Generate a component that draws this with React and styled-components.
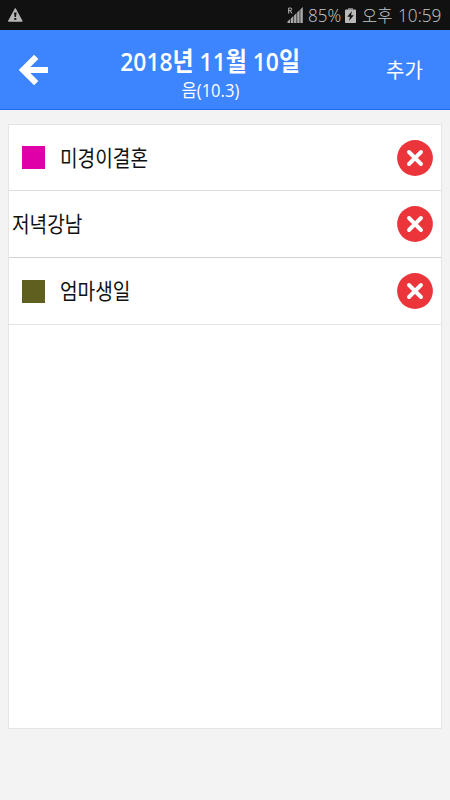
import React from 'react'
import styled, { createGlobalStyle } from 'styled-components'

const GlobalStyle = createGlobalStyle`
    * {
        box-sizing: border-box;
    }

    body {
        margin: 0;
        background-color: #f3f3f3;
        font-family: "Open Sans", "Noto Sans CJK KR", sans-serif;
    }

    svg {
        display: block;
    }
`

const Screen = styled.div`
    display: flex;
    flex-direction: column;
    width: 450px;
    height: 800px;
    background-color: #f3f3f3;
    overflow: hidden;
`

const StatusBar = styled.div`
    display: flex;
    align-items: center;
    flex: none;
    height: 30px;
    padding: 0 8px 0 7px;
    background-color: #111111;
    color: #c8c8c8;
`

const StatusIcons = styled.div`
    display: flex;
    align-items: center;
    margin-left: auto;
`

// condensed text, the box keeps the drawn width
const Label = styled.span`
    display: flex;
    flex: none;
    justify-content: ${props => props.$align || 'flex-start'};
    width: ${props => props.$width}px;
    margin-left: ${props => props.$left || 0}px;
    margin-bottom: ${props => props.$lift || 0}px;
    font-size: ${props => props.$size}px;
    font-weight: ${props => props.$weight || 400};
    line-height: 1;
    white-space: pre;

    > span {
        flex: none;
        transform: scaleX(${props => props.$scale || 1});
        transform-origin: ${props => props.$align === 'center' ? 'center' : 'left'};
    }
`

const Header = styled.header`
    display: grid;
    grid-template-columns: 69px 1fr 99px;
    flex: none;
    height: 80px;
    background-color: #3d84ff;
    border-bottom: 1px solid #1a6cf0;
    color: #ffffff;
`

const BackButton = styled.button`
    display: flex;
    align-items: flex-start;
    padding: 24px 0 0 18px;
    border: none;
    background: none;
`

const AddButton = styled.button`
    display: flex;
    align-items: flex-start;
    padding: 31px 0 0 35px;
    border: none;
    background: none;
    color: inherit;
    font-family: inherit;
`

const TitleBox = styled.div`
    display: flex;
    flex-direction: column;
    align-items: center;
    gap: 7px;
    padding-top: 18px;
`

const Panel = styled.ul`
    flex: none;
    width: 434px;
    height: 605px;
    margin: 14px 0 0 8px;
    padding: 0;
    list-style: none;
    background-color: #ffffff;
    border: 1px solid #e5e5e5;
`

const Row = styled.li`
    display: flex;
    align-items: center;
    height: ${props => props.$height}px;
    padding: 0 8px 0 ${props => props.$plain ? 3 : 13}px;
    border-bottom: 1px solid ${props => props.$line};
    color: #111111;
`

const Swatch = styled.span`
    flex: none;
    width: 23px;
    height: 23px;
    margin-right: 15px;
    background-color: ${props => props.$color};
`

const RemoveButton = styled.button`
    margin-left: auto;
    padding: 0;
    border: none;
    background: none;
`

const events = [
    { name: '미경이결혼', color: '#e000a8', width: 89, height: 66, line: '#dedede' },
    { name: '저녁강남', width: 71, height: 67, line: '#d2d2d2' },
    { name: '엄마생일', color: '#5f5f20', width: 71, height: 67, line: '#e3e3e3' },
]

const Warning = () => (
    <svg width="17" height="16" viewBox="0 0 17 16">
        <path d="M8.3 1.5 L15.2 14.2 H1.4 Z" fill="#b5b5b5" stroke="#b5b5b5" strokeLinejoin="round" />
        <path d="M7 5.5 H9.6 L9 10 H7.6 Z" fill="#111111" />
        <rect x="7.3" y="11" width="2" height="1.9" fill="#111111" />
    </svg>
)

const Signal = () => (
    <svg width="17" height="17" viewBox="0 0 17 17">
        <path d="M1.7 6.5 V1 H3.4 Q4.7 1 4.7 2.3 Q4.7 3.6 3.4 3.6 H1.7 M3.3 3.6 L4.9 6.5" fill="none" stroke="#b9b9b9" />
        <path d="M0.5 16 V14.5 L3.2 12 V16 Z M3.9 16 V11.5 L6.4 9 V16 Z M7.1 16 V8.5 L9.5 6 V16 Z M10.2 16 V5.5 L12.6 3 V16 Z M13.3 16 V2.5 L15.8 0 V16 Z" fill="#a9a9a9" />
    </svg>
)

const Battery = () => (
    <svg width="11" height="15" viewBox="0 0 11 15">
        <rect x="3" y="0" width="5" height="2" fill="#777777" />
        <rect x="0" y="1.5" width="11" height="13.5" rx="0.8" fill="#b9b9b9" />
        <path d="M7 3 L2.2 8.8 H5 L4 13 L8.8 7.3 H6 Z" fill="#111111" />
    </svg>
)

const BackArrow = () => (
    <svg width="32" height="32" viewBox="0 0 32 32">
        <path d="M18.2 2.9 L5 16 L18.2 29.1 M5 16 H30" fill="none" stroke="#ffffff" strokeWidth="6" />
    </svg>
)

const RemoveIcon = () => (
    <svg width="36" height="36" viewBox="0 0 36 36">
        <circle cx="18" cy="18" r="17.9" fill="#eb353b" />
        <path d="M12 12 L24 24 M24 12 L12 24" stroke="#ffffff" strokeWidth="3.9" strokeLinecap="round" />
    </svg>
)

const App = () => {
    const rows = events.map((event) => {
        return (
            <Row key={event.name} $plain={!event.color} $height={event.height} $line={event.line}>
                {event.color && <Swatch $color={event.color} />}
                <Label $size={22} $scale={0.87} $width={event.width} $lift={2}>
                    <span>{event.name}</span>
                </Label>
                <RemoveButton aria-label="삭제">
                    <RemoveIcon />
                </RemoveButton>
            </Row>
        )
    })

    return (
        <Screen>
            <GlobalStyle />
            <StatusBar>
                <Warning />
                <StatusIcons>
                    <Signal />
                    <Label $size={18.5} $weight={300} $scale={0.92} $width={37} $left={4}>
                        <span>85%</span>
                    </Label>
                    <Battery />
                    <Label $size={17} $weight={300} $scale={0.97} $width={31} $left={6}>
                        <span>오후</span>
                    </Label>
                    <Label $size={18.5} $weight={300} $scale={0.93} $width={44} $left={5}>
                        <span>10:59</span>
                    </Label>
                </StatusIcons>
            </StatusBar>
            <Header>
                <BackButton aria-label="뒤로">
                    <BackArrow />
                </BackButton>
                <TitleBox>
                    <Label $size={26} $weight={600} $scale={0.88} $width={182} $align="center">
                        <span>2018년 11월 10일</span>
                    </Label>
                    <Label $size={18} $scale={0.92} $width={60} $align="center">
                        <span>음(10.3)</span>
                    </Label>
                </TitleBox>
                <AddButton>
                    <Label $size={20} $scale={1} $width={38}>
                        <span>추가</span>
                    </Label>
                </AddButton>
            </Header>
            <Panel>{rows}</Panel>
        </Screen>
    )
}

export default App
